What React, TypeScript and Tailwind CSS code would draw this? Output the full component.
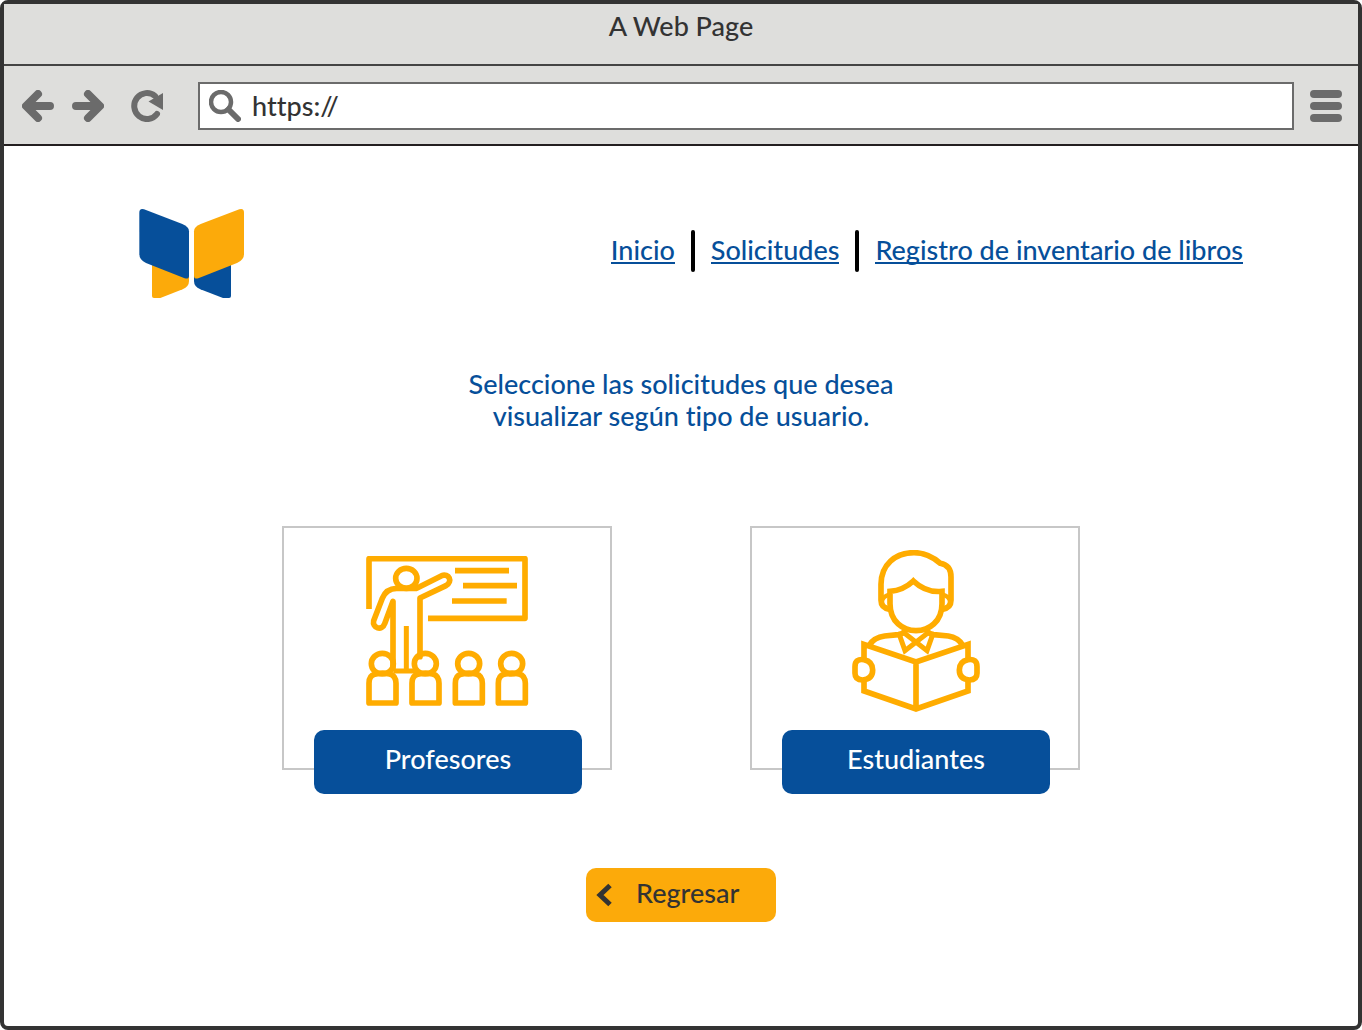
import React from "react";

const links = ["Inicio", "Solicitudes", "Registro de inventario de libros"];

function ArrowLeft() {
  return (
    <svg viewBox="0 0 32 32" className="size-8" fill="none" stroke="#6b6b6b" strokeWidth="8" strokeLinecap="round" strokeLinejoin="round" aria-hidden="true">
      <path d="M28 16H7M16 4L4 16L16 28" />
    </svg>
  );
}

function ArrowRight() {
  return (
    <svg viewBox="0 0 32 32" className="size-8" fill="none" stroke="#6b6b6b" strokeWidth="8" strokeLinecap="round" strokeLinejoin="round" aria-hidden="true">
      <path d="M4 16H25M16 4L28 16L16 28" />
    </svg>
  );
}

function Reload() {
  return (
    <svg viewBox="0 0 32 32" className="size-8" aria-hidden="true">
      <path d="M26 24A12.7 13 0 1 1 24 6" fill="none" stroke="#6b6b6b" strokeWidth="6" strokeLinecap="round" />
      <path d="M32 3V20L17.500 11.500Z" fill="#6b6b6b" />
    </svg>
  );
}

function Search() {
  return (
    <svg viewBox="0 0 32 32" className="size-8 shrink-0" fill="none" stroke="#6b6b6b" aria-hidden="true">
      <circle cx="12" cy="12" r="10" strokeWidth="4.500" />
      <path d="M19.500 19.500L29 29" strokeWidth="6" strokeLinecap="round" />
    </svg>
  );
}

function Menu() {
  return (
    <svg viewBox="0 0 32 32" className="size-8" stroke="#6b6b6b" strokeWidth="8" strokeLinecap="round" aria-hidden="true">
      <path d="M4 4H28M4 16H28M4 28H28" />
    </svg>
  );
}

function Logo() {
  return (
    <svg viewBox="57 57 315 267" className="h-[89px] w-[105px]" role="img" aria-label="Biblioteca">
      <path d="M96 225V318Q96 324 102 324H121L188 298Q207 290 207 273V225Z" fill="#fcaa0a" />
      <path d="M333 225V318Q333 324 327 324H309L241 298Q222 290 222 273V225Z" fill="#064f9a" />
      <path d="M58 68Q58 54 72 58L187 102Q207 110 207 124V258Q207 268 194 265L78 219Q58 210 58 192Z" fill="#064f9a" />
      <path d="M372 68Q372 54 358 58L242 102Q222 110 222 124V258Q222 268 235 265L351 219Q372 210 372 192Z" fill="#fcaa0a" />
    </svg>
  );
}

function Pupil({ x }: { x: number }) {
  return (
    <g transform={`translate(${x} 0)`}>
      <ellipse cx="97" cy="371" rx="33" ry="31" />
      <path d="M74 403Q57 407 57 430V489H138V430Q138 407 119 402Q97 396 74 403Z" />
    </g>
  );
}

function ClassroomIcon() {
  return (
    <svg viewBox="48 48 492 450" className="h-[150px] w-[164px]" fill="none" stroke="#ffac00" strokeWidth="17" strokeLinejoin="round" aria-hidden="true">
      <path d="M57 207V56H525V235H234" />
      <path d="M315 92H477M339 137H501M306 183H470" />
      <ellipse cx="169" cy="115" rx="32" ry="30" />
      <path d="M210 350V174L288 137C310 124 296 99 275 107L200 145H140Q108 146 97 175L71 242C66 264 96 275 104 251L129 184V385" strokeLinecap="round" />
      <path d="M169 258V393M130 393H204" strokeWidth="15" />
      <Pupil x={0} />
      <Pupil x={129} />
      <Pupil x={259} />
      <Pupil x={388} />
    </svg>
  );
}

function ReaderIcon() {
  return (
    <svg viewBox="51 45 384 486" className="h-[162px] w-[128px]" fill="none" stroke="#ffac00" strokeWidth="17" aria-hidden="true">
      <path d="M164 223Q138 219 138 196V148C138 90 180 53 237 53C268 53 292 64 316 85Q348 91 348 126V196Q348 219 322 223" />
      <path d="M164 178Q141 185 141 201Q141 216 160 220M322 178Q345 185 345 201Q345 216 326 220" strokeWidth="13" />
      <path d="M165 169V206C165 314 321 314 321 206V169Q273 174 235 138Q205 166 165 169Z" />
      <path d="M104 329Q117 308 149 303L190 299Q203 297 211 287M382 329Q369 308 340 303L296 299Q283 297 275 287" />
      <path d="M193 299L210 347L283 290M293 299L276 347L203 290" strokeWidth="15" />
      <path d="M87 372V328L243 381L399 328V372M87 438V468L243 522L399 468V438M243 381V522" />
      <path d="M87 374Q113 379 113 405Q113 432 83 435Q60 435 60 415V395Q60 370 87 374ZM399 374Q373 379 373 405Q373 432 403 435Q426 435 426 415V395Q426 370 399 374Z" />
    </svg>
  );
}

function Card({ label, children }: { label: string; children: React.ReactNode }) {
  return (
    <section className="flex h-[244px] w-[330px] flex-col items-center justify-between border-2 border-[#c7c7c7] pt-5 pl-0.5">
      <div className="flex h-[166px] items-center">{children}</div>
      <button type="button" className="-mb-[26px] h-16 w-[268px] shrink-0 rounded-[10px] bg-[#064f9a] pb-1.5 text-white">
        {label}
      </button>
    </section>
  );
}

export default function App() {
  return (
    <div className="bg-white font-['Lato',sans-serif] text-[27px] leading-8 font-medium [font-variant-ligatures:none]">
      <div className="flex min-h-screen flex-col rounded-lg border-4 border-[#333333] bg-white">
        <div className="flex h-[62px] items-start justify-center border-b-2 border-[#444444] bg-[#dededc] pt-1.5 text-[#333333]">
          <h1>A Web Page</h1>
        </div>
        <div className="flex h-20 items-center border-b-2 border-[#231f20] bg-[#dededc] pt-0.5 pr-4 pl-[18px]">
          <button type="button" aria-label="Atrás"><ArrowLeft /></button>
          <button type="button" aria-label="Adelante" className="ml-[18px]"><ArrowRight /></button>
          <button type="button" aria-label="Recargar" className="ml-[27px]"><Reload /></button>
          <label className="mx-4 ml-[35px] flex h-12 min-w-0 grow items-center gap-[11px] border-2 border-[#6b6b6b] bg-white pl-[9px]">
            <Search />
            <input type="text" aria-label="Dirección" defaultValue="https://" className="min-w-0 grow text-[#333333] outline-none" />
          </label>
          <button type="button" aria-label="Menú"><Menu /></button>
        </div>
        <header className="flex items-center justify-between pt-[63px] pr-[115px] pl-[135px]">
          <Logo />
          <nav className="flex items-center gap-4 pb-1.5 text-[#064f9a]">
            {links.map((l, i) => (
              <React.Fragment key={l}>
                {i > 0 && <span className="h-[42px] w-1 rounded-sm bg-black" />}
                <a href="#" className="border-b-2 border-[#064f9a] leading-6">{l}</a>
              </React.Fragment>
            ))}
          </nav>
        </header>
        <main className="flex flex-col items-center pt-[70px]">
          <p className="text-center text-[#064f9a]">
            Seleccione las solicitudes que desea
            <br />
            visualizar según tipo de usuario.
          </p>
          <div className="mt-[94px] flex gap-[138px]">
            <Card label="Profesores"><ClassroomIcon /></Card>
            <Card label="Estudiantes"><ReaderIcon /></Card>
          </div>
          <button type="button" className="mt-[98px] flex h-[54px] w-[190px] items-center gap-6 rounded-[10px] bg-[#fcaa0a] pl-[10px] text-[#333333]">
            <svg viewBox="0 0 16 24" className="h-6 w-4" fill="none" stroke="#333333" strokeWidth="5" aria-hidden="true">
              <path d="M14 2.500L4 12L14 21.500" />
            </svg>
            <span className="pb-1">Regresar</span>
          </button>
        </main>
      </div>
    </div>
  );
}
